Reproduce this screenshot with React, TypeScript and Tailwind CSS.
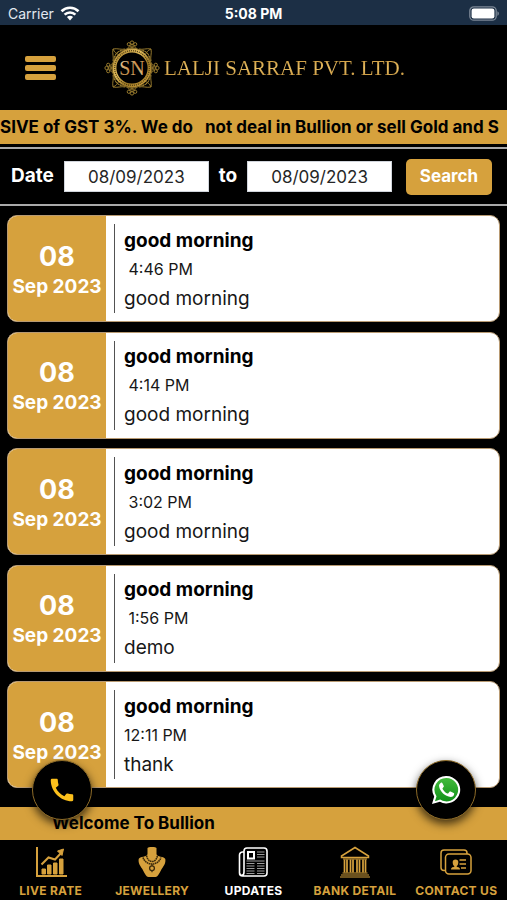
import { type ReactNode } from "react"
import { MdCall } from "react-icons/md"

interface Update {
  day: string
  month: string
  title: string
  time: string
  body: string
}

const UPDATES: Update[] = [
  { day: "08", month: "Sep 2023", title: "good morning", time: " 4:46 PM", body: "good morning" },
  { day: "08", month: "Sep 2023", title: "good morning", time: " 4:14 PM", body: "good morning" },
  { day: "08", month: "Sep 2023", title: "good morning", time: " 3:02 PM", body: "good morning" },
  { day: "08", month: "Sep 2023", title: "good morning", time: " 1:56 PM", body: "demo" },
  { day: "08", month: "Sep 2023", title: "good morning", time: "12:11 PM", body: "thank" },
]

function StatusBar() {
  return (
    <div className="grid h-[25px] shrink-0 grid-cols-3 items-center bg-[#1c2f45] px-2 pt-[2px] text-[14px] text-white">
      <div className="flex items-center gap-[6px] text-slate-200">
        <span>Carrier</span>
        <svg viewBox="0 0 20 15" className="h-[15px] w-5" fill="none" stroke="white" strokeWidth="2.6">
          <path d="M1.5 5.2a12.2 12.2 0 0 1 17 0" />
          <path d="M4.6 8.6a7.8 7.8 0 0 1 10.8 0" />
          <path d="M6.9 11.1a4.6 4.6 0 0 1 6.2 0L10 14.4z" fill="white" stroke="none" />
        </svg>
      </div>
      <span className="text-center font-bold">5:08 PM</span>
      <svg viewBox="0 0 31 15" className="h-[15px] w-[31px] justify-self-end">
        <rect x="1.8" y="0.8" width="26.4" height="13.4" rx="4" fill="none" stroke="#7c8896" strokeWidth="1.3" />
        <rect x="3.6" y="2.6" width="22.8" height="9.8" rx="2.2" fill="white" />
        <path d="M29.4 5.2c2 .8 2 3.8 0 4.6z" fill="#7c8896" />
      </svg>
    </div>
  )
}

// One filigree flower; repeated on the four sides of the emblem.
function Flower({ angle }: { angle: number }) {
  return (
    <g transform={`rotate(${angle} 28 28)`}>
      <circle cx="28" cy="2.6" r="1.7" />
      <circle cx="24.800" cy="4.2" r="1.6" />
      <circle cx="31.200" cy="4.2" r="1.6" />
      <circle cx="28" cy="5.800" r="1.3" />
      <path d="M23.5 8.2c1.5-2 3-2 4.5 0 1.5-2 3-2 4.5 0" />
      <path d="M16 10.500c4 .5 6-2.500 12-2.500s8 3 12 2.500" />
    </g>
  )
}

// Curled leaf ornament for the diagonals.
function Corner({ angle }: { angle: number }) {
  return (
    <g transform={`rotate(${angle} 28 28)`}>
      <path d="M9 21c1-4-1-7.500 0-12 4.500-1 8 1 12 0" />
      <path d="M9 9c1.500 3.500 3.500 4.500 5.500 5.500M11 17.500c0-3 1-4.500 3.500-5.500M17.500 11c-3 0-4.500 1-5.500 3.500" />
    </g>
  )
}

function Logo() {
  return (
    <div className="flex items-center gap-1">
      <svg viewBox="0 0 56 56" className="size-14" fill="none">
        <defs>
          <linearGradient id="gold" x1="0" y1="0" x2="1" y2="1">
            <stop offset="0" stopColor="#a9822c" />
            <stop offset="0.4" stopColor="#e3bd5c" />
            <stop offset="0.65" stopColor="#9c7724" />
            <stop offset="1" stopColor="#d0a340" />
          </linearGradient>
          <linearGradient id="letters" x1="0" y1="0" x2="1" y2="1">
            <stop offset="0" stopColor="#f0dcae" />
            <stop offset="0.5" stopColor="#c78f4a" />
            <stop offset="1" stopColor="#e2c689" />
          </linearGradient>
        </defs>
        <g stroke="#96792d" strokeWidth="1">
          {[0, 90, 180, 270].map((angle) => (
            <Flower key={angle} angle={angle} />
          ))}
          {[0, 90, 180, 270].map((angle) => (
            <Corner key={angle} angle={angle} />
          ))}
        </g>
        <circle cx="28" cy="28" r="17.500" fill="black" stroke="url(#gold)" strokeWidth="3.800" />
        <circle cx="28" cy="28" r="17.300" stroke="#4a3810" strokeWidth="1.200" strokeDasharray="1 1" />
        <text
          x="28"
          y="35"
          textAnchor="middle"
          fontSize="20"
          fill="url(#letters)"
          className="font-['Liberation_Serif',serif]"
        >
          SN
        </text>
      </svg>
      <span className="bg-linear-to-b from-[#b8852b] via-[#e8bd62] to-[#b07d28] bg-clip-text font-['Liberation_Serif',serif] text-[21px] leading-7 whitespace-nowrap text-transparent">
        LALJI SARRAF PVT. LTD.
      </span>
    </div>
  )
}

function Header() {
  return (
    <header className="flex h-[85px] shrink-0 items-center bg-black px-[25px]">
      <button type="button" aria-label="Menu" className="flex w-[31px] flex-col gap-[3px]">
        <span className="h-[6px] rounded-[2px] bg-[#d6a13d]" />
        <span className="h-[6px] rounded-[2px] bg-[#d6a13d]" />
        <span className="h-[6px] rounded-[2px] bg-[#d6a13d]" />
      </button>
      <div className="ml-12">
        <Logo />
      </div>
    </header>
  )
}

function DateFilter() {
  const field =
    "h-[31px] w-0 min-w-0 flex-1 border border-gray-300 bg-white text-center text-[17px] font-normal text-neutral-800 outline-none"
  return (
    <form
      className="flex h-[59px] shrink-0 items-center border-y-2 border-[#a9a9a9] pr-[15px] pl-[11px] text-[19px] font-bold text-white"
      onSubmit={(e) => e.preventDefault()}
    >
      <label htmlFor="from">Date</label>
      <input id="from" type="text" defaultValue="08/09/2023" className={`${field} ml-[10px]`} />
      <label htmlFor="to" className="mx-[10px]">
        to
      </label>
      <input id="to" type="text" defaultValue="08/09/2023" className={field} />
      <button type="submit" className="ml-[14px] h-9 w-[86px] rounded-[5px] bg-[#d6a13d] text-[17px]">
        Search
      </button>
    </form>
  )
}

function UpdateCard({ day, month, title, time, body }: Update) {
  return (
    <article className="flex h-[107px] overflow-hidden rounded-[10px] border border-[#b89a72] bg-white">
      <div className="flex w-[98px] shrink-0 flex-col items-center justify-center bg-[#d6a13d] pt-1 font-bold text-white">
        <span className="text-[27px] leading-8">{day}</span>
        <span className="text-[19px] leading-7 whitespace-nowrap">{month}</span>
      </div>
      <div className="my-2 ml-2 flex flex-col justify-center border-l border-neutral-600 pt-px pl-[9px] text-neutral-900">
        <h2 className="text-[19px] leading-[29px] font-bold text-black">{title}</h2>
        <p className="text-[16px] leading-[29px] whitespace-pre">{time}</p>
        <p className="text-[19px] leading-[29px]">{body}</p>
      </div>
    </article>
  )
}

function LiveRateIcon() {
  return (
    <svg viewBox="0 0 32 32" className="size-8" fill="none" stroke="currentColor">
      <path d="M2 1v29h30" strokeWidth="2" />
      <path d="M7 28v-5h3.500v5zM12.500 28v-9H16v9zM18.500 28V17H22v11zM24.500 28V13H28v15z" fill="currentColor" strokeWidth="1" />
      <path d="M6.500 18.500l7-7 6.500 2 7-7.500" strokeWidth="2" />
      <path d="M22.500 5l6-2-1.500 6.500z" fill="currentColor" strokeWidth="1" />
    </svg>
  )
}

function JewelleryIcon() {
  return (
    <svg viewBox="0 0 32 32" className="size-8" fill="none">
      <path
        d="M11.500 2c0-1.500 9-1.500 9 0v6c0 3 8 2.500 8.800 5 .6 4-1.300 6.500-3.300 9.500-2 3.500-4 8.500-6.500 8.500h-7c-2.500 0-4.500-5-6.500-8.500-2-3-3.900-5.500-3.300-9.500.8-2.500 8.800-2 8.800-5z"
        fill="currentColor"
      />
      <path d="M10.500 9.500c1 4.500 3.200 6 5.500 6s4.500-1.500 5.500-6" stroke="#3a2a0c" strokeWidth="1.500" strokeDasharray="1.700 .5" />
      <path d="M7 11.500c1.500 4.500 5.500 6.500 9 6.500s7.500-2 9-6.500" stroke="#3a2a0c" strokeWidth="1.600" strokeDasharray="1.600 .5" />
      <path d="M16 18v2" stroke="#3a2a0c" strokeWidth="1.200" />
      <circle cx="16" cy="22.300" r="2.400" stroke="#3a2a0c" strokeWidth="1.300" />
      <path d="M16 24.500v1.800" stroke="#3a2a0c" strokeWidth="1.200" />
    </svg>
  )
}

function UpdatesIcon() {
  return (
    <svg viewBox="0 0 32 32" className="size-8" fill="none" stroke="currentColor" strokeWidth="1.600">
      <path d="M7 6H5.500a3 3 0 0 0-3 3v18a3 3 0 0 0 3 3H27a3 3 0 0 0 3-3V5a3 3 0 0 0-3-3H10a3 3 0 0 0-3 3v21c0 4.500-4 4-4.300 1" />
      <rect x="11" y="6" width="6" height="6.500" strokeWidth="2" />
      <path
        d="M20 6h7.500M20 8.500h7.500M20 11h7.500M9.500 15h18M9.500 17.500h8M20 17.500h7.500M9.500 20h8M20 20h7.500M9.500 22.500h8M20 22.500h7.500M9.500 25h8M20 25h7.500M9.500 27.500h8M20 27.500h7.500"
        stroke="#9a9a9a"
        strokeWidth="1"
      />
    </svg>
  )
}

function BankIcon() {
  return (
    <svg viewBox="0 0 32 32" className="size-8" fill="none" stroke="currentColor">
      <path d="M16 1.500L2.500 10v1.500h27V10z" strokeWidth="1.500" />
      <path
        d="M5.500 13.500v13M8 13.500v13M11.500 13.500v13M14 13.500v13M18 13.500v13M20.500 13.500v13M24 13.500v13M26.500 13.500v13"
        strokeWidth="1.700"
      />
      <path d="M4 13h24M3.500 27h25M2 29h28M1 31h30" strokeWidth="1.200" />
    </svg>
  )
}

function ContactIcon() {
  return (
    <svg viewBox="0 0 32 32" className="size-8" fill="none" stroke="currentColor" strokeWidth="1.500">
      <path d="M5.500 24.500H4A3 3 0 0 1 1 21.500V7a3 3 0 0 1 3-3h20a3 3 0 0 1 3 3v1" />
      <rect x="5.500" y="8" width="25.500" height="20" rx="3.500" />
      <path
        d="M11 23.500c0-2.500 2.500-2 3.500-3.200-1.500-1-1.800-2.500-1.800-4a2.800 2.800 0 0 1 5.600 0c0 1.500-.3 3-1.800 4 1 1.200 3.500.7 3.500 3.200z"
        fill="currentColor"
        stroke="none"
      />
      <path d="M19.500 14h6.500M19.500 18h6.500M21 22h5" strokeWidth="1.600" />
    </svg>
  )
}

function WhatsAppIcon() {
  return (
    <svg viewBox="0 0 30 30" className="size-[30px]">
      <defs>
        <linearGradient id="wa" x1="0" y1="0" x2="0" y2="1">
          <stop offset="0" stopColor="#43bb3c" />
          <stop offset="1" stopColor="#109018" />
        </linearGradient>
      </defs>
      <path d="M15.500 1a13.700 13.700 0 1 1-6.600 25.700L1 29l2.200-7.500A13.700 13.700 0 0 1 15.500 1z" fill="white" />
      <path d="M15.500 3a11.700 11.700 0 1 1-6.300 21.600L4 26.200l1.500-5A11.700 11.700 0 0 1 15.500 3z" fill="url(#wa)" />
      <path
        d="M11.600 8.500c-.5-1-1-1-1.700-.8-1.200.7-2 2-1.800 3.600.7 5.200 6 10.300 11.600 10.700 1.800 0 3.300-1.300 3.500-3 0-.6-.1-.8-.6-1l-3-1.500c-.5-.2-.8-.1-1.100.3l-1.200 1.500c-.3.3-.6.3-1 .1-2.200-1-3.700-2.600-4.700-4.500-.2-.4-.1-.6.2-.9l.9-1.200c.2-.3.200-.6.100-.9z"
        fill="white"
      />
    </svg>
  )
}

const NAV: { label: string; icon: ReactNode; active?: boolean }[] = [
  { label: "LIVE RATE", icon: <LiveRateIcon /> },
  { label: "JEWELLERY", icon: <JewelleryIcon /> },
  { label: "UPDATES", icon: <UpdatesIcon />, active: true },
  { label: "BANK DETAIL", icon: <BankIcon /> },
  { label: "CONTACT US", icon: <ContactIcon /> },
]

function BottomNav() {
  return (
    <nav className="grid h-[60px] shrink-0 grid-cols-5 bg-black pt-[6px]">
      {NAV.map(({ label, icon, active }) => (
        <a
          key={label}
          href="#"
          className={`flex flex-col items-center gap-[5px] text-[12px] leading-4 font-bold tracking-wide whitespace-nowrap ${
            active ? "text-white" : "text-[#d6a13d]"
          }`}
        >
          {icon}
          {label}
        </a>
      ))}
    </nav>
  )
}

export default function App() {
  const fab =
    "absolute -top-[47px] flex size-[60px] items-center justify-center rounded-full border border-[#8d6b28] bg-black shadow-[0_4px_10px_rgba(0,0,0,0.7)]"
  return (
    <div className="flex min-h-screen flex-col overflow-x-hidden bg-black font-[Inter,sans-serif]">
      <StatusBar />
      <Header />
      <div className="flex h-[34px] shrink-0 items-center overflow-hidden bg-[#d6a13d] pt-[2px] text-[17px] font-bold whitespace-pre text-black">
        SIVE of GST 3%. We do   not deal in Bullion or sell Gold and S
      </div>
      <div className="h-[3px] shrink-0" />
      <DateFilter />
      <main className="flex flex-1 flex-col justify-between px-[7px] pt-[9px] pb-[19px]">
        {UPDATES.map((update, i) => (
          <UpdateCard key={i} {...update} />
        ))}
      </main>
      <div className="relative flex h-[33px] shrink-0 items-center bg-[#d6a13d] pl-[52px] text-[17px] font-bold text-black">
        Welcome To Bullion
        <button type="button" aria-label="Call" className={`${fab} left-8`}>
          <MdCall className="size-[30px] text-[#fcc01c]" />
        </button>
        <button type="button" aria-label="WhatsApp" className={`${fab} right-[31px]`}>
          <WhatsAppIcon />
        </button>
      </div>
      <BottomNav />
    </div>
  )
}
